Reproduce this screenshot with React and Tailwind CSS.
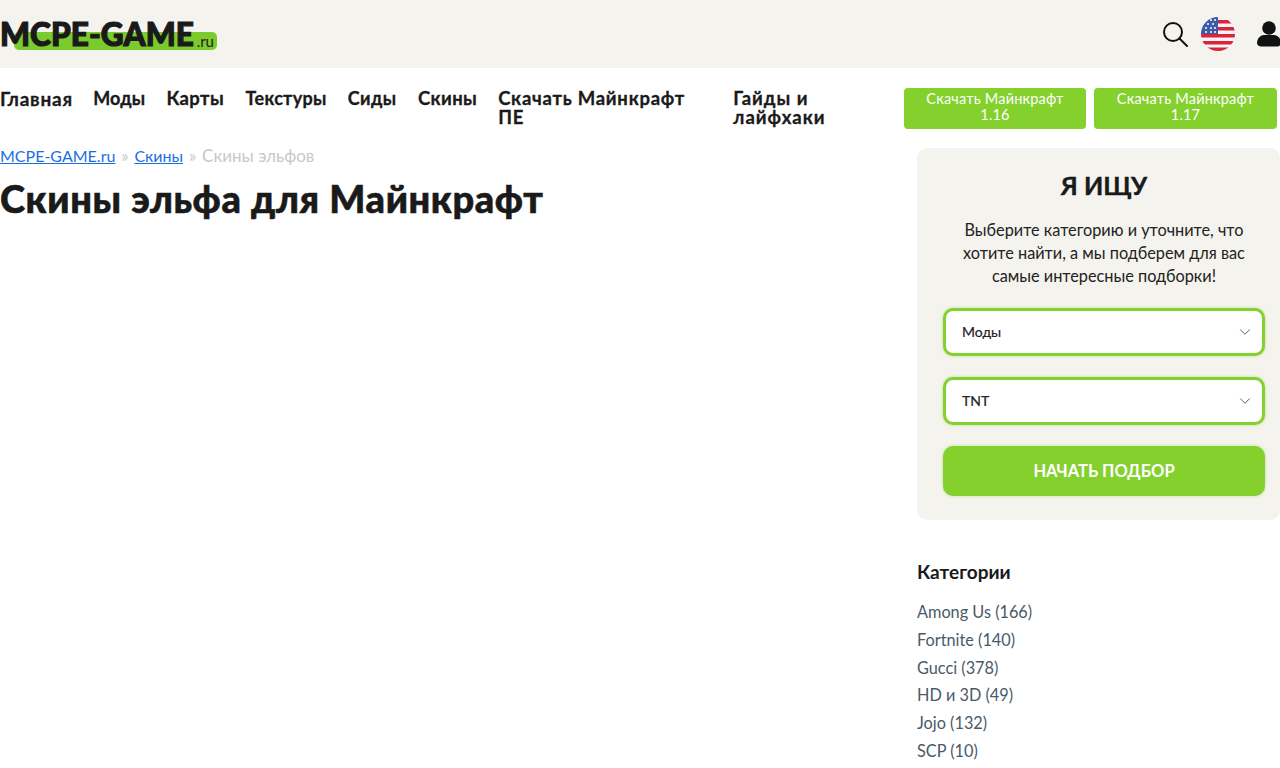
import { ChevronDown } from 'lucide-react';

const font = 'font-["Lato","Noto_Sans",sans-serif]';

const navItems = [
    { label: 'Главная', cls: 'w-[72px] text-[19px] tracking-[0.8px]' },
    { label: 'Моды', cls: 'w-[52px] text-[18px] tracking-[0.1px]' },
    { label: 'Карты', cls: 'w-[58px] text-[18.500px] tracking-[0.4px]' },
    { label: 'Текстуры', cls: 'w-[81px] text-[18px] tracking-[0.3px]' },
    { label: 'Сиды', cls: 'w-[49px] text-[18px] tracking-[0.4px]' },
    { label: 'Скины', cls: 'w-[59px] text-[18.500px] tracking-[0.4px]' },
    { label: 'Скачать Майнкрафт', second: 'ПЕ', cls: 'w-[214px] text-[18.500px] tracking-[0.75px]' },
    { label: 'Гайды и', second: 'лайфхаки', cls: 'w-[110px] text-[18.500px] tracking-[1px]' },
];

const categories = ['Among Us (166)', 'Fortnite (140)', 'Gucci (378)', 'HD и 3D (49)', 'Jojo (132)', 'SCP (10)'];

function Flag() {
    return (
        <svg viewBox="0 0 34 34" className="w-[34px] h-[34px]">
            <defs>
                <clipPath id="flag-circle">
                    <circle cx="17" cy="17" r="17" />
                </clipPath>
            </defs>
            <g clipPath="url(#flag-circle)">
                <rect width="34" height="34" fill="#f4f4f4" />
                <rect x="17" y="3" width="17" height="3.5" fill="#d8243c" />
                <rect x="17" y="10" width="17" height="3.5" fill="#d8243c" />
                <rect y="17" width="34" height="3.5" fill="#d8243c" />
                <rect y="24" width="34" height="3.5" fill="#d8243c" />
                <rect y="30.5" width="34" height="3.5" fill="#d8243c" />
                <rect width="17" height="17" fill="#3c5aa6" />
                <g fill="#fff">
                    <circle cx="5" cy="11" r="1" />
                    <circle cx="10" cy="11" r="1" />
                    <circle cx="14" cy="11" r="1" />
                    <circle cx="7" cy="7" r="1" />
                    <circle cx="12" cy="7" r="1" />
                    <circle cx="10" cy="3" r="1" />
                    <circle cx="14" cy="3" r="1" />
                    <circle cx="5" cy="15" r="1" />
                    <circle cx="10" cy="15" r="1" />
                    <circle cx="14" cy="15" r="1" />
                </g>
            </g>
        </svg>
    );
}

function SearchIcon() {
    return (
        <svg viewBox="0 0 25 25" className="w-[25px] h-[25px]" fill="none" stroke="#111" strokeWidth="2">
            <circle cx="10" cy="10" r="9" />
            <path d="M16.500 16.500L24 24" strokeLinecap="round" />
        </svg>
    );
}

function UserIcon() {
    return (
        <svg viewBox="0 0 24 26" className="w-[24px] h-[26px]" fill="#111">
            <circle cx="12" cy="7" r="6.8" />
            <path d="M0 22c0-5 4-8 7-8h10c3 0 7 3 7 8 0 2-2 3.500-4 3.500H4c-2 0-4-1.500-4-3.500z" />
        </svg>
    );
}

function Select({ value }) {
    return (
        <div className="h-[48px] rounded-[10px] border-[3px] border-[#84d12e] bg-white pl-[16px] pr-[8px] flex items-center justify-between text-[14px] text-[#222] shadow-[0_0_3px_rgba(132,209,46,0.5)]">
            <span className="-mt-[1px] [-webkit-text-stroke:0.2px_#222]">{value}</span>
            <ChevronDown className="w-[18px] h-[18px] text-[#555]" strokeWidth={1.25} />
        </div>
    );
}

export default function App() {
    return (
        <div className={`${font} h-[768px] overflow-hidden bg-white text-[#1a1a1a]`}>
            <header className="h-[68px] bg-[#f5f3ee] flex items-center justify-between overflow-hidden">
                <div className="relative w-[217px] h-[36px]">
                    <div className="absolute left-[14px] right-0 top-[16px] h-[18px] rounded-[5px] bg-[#7ccb2e]" />
                    <span className="absolute left-0 top-0 text-[31.500px] leading-[36px] font-black tracking-[0.1px] text-[#1a1a1a] whitespace-nowrap [-webkit-text-stroke:1.2px_#1a1a1a]">MCPE-GAME</span>
                    <span className="absolute right-[3px] top-[16px] text-[15px] leading-[18px] text-[#222]">.ru</span>
                </div>
                <div className="flex items-center">
                    <SearchIcon />
                    <div className="ml-[13px]"><Flag /></div>
                    <div className="ml-[22px] w-[23px] overflow-hidden"><UserIcon /></div>
                </div>
            </header>

            <nav className="flex items-start pt-[21px] h-[80px]">
                {navItems.map((item) => (
                    <a key={item.label} className={`${item.cls} mr-[21.200px] shrink-0 leading-[19px] font-bold text-[#1a1a1a] [-webkit-text-stroke:0.3px_#1a1a1a]`}>
                        {item.label}
                        {item.second && <br />}
                        {item.second}
                    </a>
                ))}
                <div className="ml-auto flex gap-[8px] mr-[3px] -mt-[1px]">
                    <button className="w-[182px] h-[41px] pb-[3px] rounded-[4px] bg-[#84d12e] text-white text-[14.500px] tracking-[0.2px] leading-[16px]">Скачать Майнкрафт<br />1.16</button>
                    <button className="w-[183px] h-[41px] pb-[3px] rounded-[4px] bg-[#84d12e] text-white text-[14.500px] tracking-[0.2px] leading-[16px]">Скачать Майнкрафт<br />1.17</button>
                </div>
            </nav>

            <div className="flex justify-between">
                <main>
                    <div className="text-[16px] leading-[19px] -mt-[2px]">
                        <a className="text-[#1a6fe0] underline">MCPE-GAME.ru</a>
                        <span className="text-[#c8c8c8] text-[17px] px-[1.500px]"> » </span>
                        <a className="text-[#1a6fe0] underline">Скины</a>
                        <span className="text-[#c8c8c8] text-[17px] px-[1.500px]"> » </span>
                        <span className="text-[#c8c8c8] text-[17px]">Скины эльфов</span>
                    </div>
                    <h1 className="mt-[11px] text-[38px] leading-[44px] font-black tracking-[0.6px] text-[#1a1a1a] [-webkit-text-stroke:0.6px_#1a1a1a]">Скины эльфа для Майнкрафт</h1>
                </main>

                <aside className="w-[363px] shrink-0">
                    <div className="rounded-[10px] bg-[#f5f3ee] pl-[26px] pr-[15px] pt-[19px] pb-[24px]">
                        <h2 className="text-center text-[25px] leading-[36px] font-bold [-webkit-text-stroke:0.4px_#1a1a1a]">Я ИЩУ</h2>
                        <p className="mt-[15px] text-center text-[16.300px] leading-[23px] text-[#222]">
                            Выберите категорию и уточните, что<br />хотите найти, а мы подберем для вас<br />самые интересные подборки!
                        </p>
                        <div className="mt-[21px] flex flex-col gap-[21px]">
                            <Select value="Моды" />
                            <Select value="TNT" />
                            <button className="h-[50px] rounded-[10px] bg-[#84d12e] text-white text-[16.500px] font-bold shadow-[0_0_3px_rgba(132,209,46,0.5)]">НАЧАТЬ ПОДБОР</button>
                        </div>
                    </div>
                    <h3 className="mt-[40px] text-[19px] leading-[24px] font-bold">Категории</h3>
                    <ul className="mt-[14px] text-[16.300px] leading-[27.800px] text-[#4a5a68]">
                        {categories.map((c) => (
                            <li key={c}>{c}</li>
                        ))}
                    </ul>
                </aside>
            </div>
        </div>
    );
}
